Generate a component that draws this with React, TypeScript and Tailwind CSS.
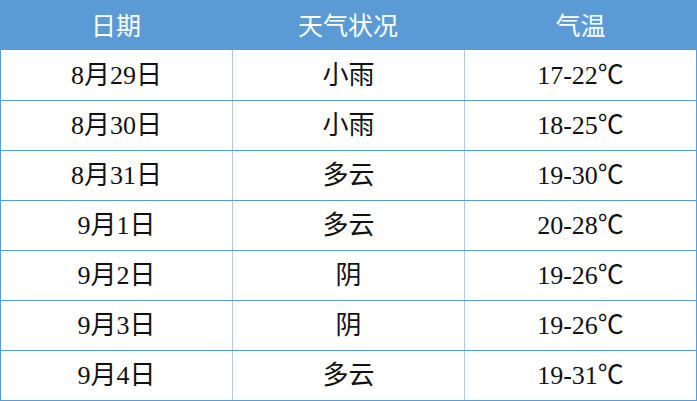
import React from 'react';

// --- Data ---
type Forecast = {
    date: string;
    weather: string;
    temp: string;
};

const forecasts: Forecast[] = [
    { date: '8月29日', weather: '小雨', temp: '17-22℃' },
    { date: '8月30日', weather: '小雨', temp: '18-25℃' },
    { date: '8月31日', weather: '多云', temp: '19-30℃' },
    { date: '9月1日', weather: '多云', temp: '20-28℃' },
    { date: '9月2日', weather: '阴', temp: '19-26℃' },
    { date: '9月3日', weather: '阴', temp: '19-26℃' },
    { date: '9月4日', weather: '多云', temp: '19-31℃' },
];

const headers = ['日期', '天气状况', '气温'];

export default function App() {
    return (
        <div className="w-[697px] h-[401px] bg-white">
            {/* Header */}
            <div className="flex h-[50px] bg-[#5b9bd5] text-white text-[25px] font-['Noto_Sans_CJK_SC',sans-serif]">
                {headers.map((h, i) => (
                    <div
                        key={h}
                        className={`flex items-center justify-center ${i === 2 ? 'w-[233px]' : 'w-[232px]'}`}
                    >
                        {h}
                    </div>
                ))}
            </div>

            {/* Body */}
            <div className="border-x border-b border-[#5b9bd5] font-['Liberation_Serif','Noto_Sans_CJK_SC',serif]">
                {forecasts.map((row, idx) => (
                    <div
                        key={row.date}
                        className={`flex text-[26px] text-[#111] ${idx === 0 ? 'h-[50px]' : 'h-[50px] border-t border-[#5b9bd5]'}`}
                    >
                        <div className="w-[231px] flex items-center justify-center">{row.date}</div>
                        <div className="w-[232px] border-l border-[#b4c6e7] flex items-center justify-center">{row.weather}</div>
                        <div className="w-[232px] border-l border-[#b4c6e7] flex items-center justify-center">{row.temp}</div>
                    </div>
                ))}
            </div>
        </div>
    );
}
